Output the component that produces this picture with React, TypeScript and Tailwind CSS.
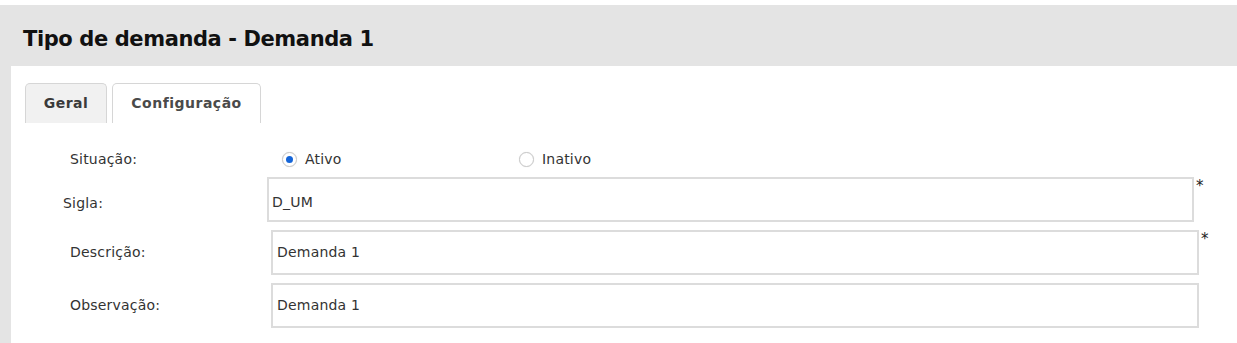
import React from "react";

function Radio({ checked }: { checked: boolean }) {
  return (
    <span className="w-[15px] h-[15px] shrink-0 rounded-full border border-[#c8c8c8] bg-white flex items-center justify-center shadow-[0_0_1px_#ddd]">
      {checked && <span className="w-[7px] h-[7px] rounded-full bg-[#1565d8]" />}
    </span>
  );
}

export default function App() {
  const font = { fontFamily: '"DejaVu Sans", Verdana, sans-serif' };
  return (
    <div className="w-[1237px] h-[343px] bg-white pt-[5px] overflow-hidden" style={font}>
      <div className="bg-[#e4e4e4] h-[338px] flex flex-col pl-[11px]">
        <div className="h-[61px] shrink-0 pl-[12px] pt-[22px]">
          <h1 className="text-[21px] leading-[25px] font-bold text-[#111] tracking-[-0.4px]">
            Tipo de demanda - Demanda 1
          </h1>
        </div>
        <div className="bg-white flex-1 pt-[17px] pl-[14px]">
          <div className="flex gap-[5px] items-end">
            <div className="w-[82px] h-[40px] rounded-t-[5px] border border-b-0 border-[#d6d6d6] bg-[#f1f1f1] flex items-center justify-center text-[14px] font-bold text-[#3a3a3a] tracking-[0.5px]">
              Geral
            </div>
            <div className="w-[149px] h-[40px] rounded-t-[5px] border border-b-0 border-[#d6d6d6] bg-white flex items-center justify-center text-[14px] font-bold text-[#4a4a4a] tracking-[0.5px]">
              Configuração
            </div>
          </div>
          <div className="text-[14px] text-[#333] tracking-[0.2px] pt-[24px]">
            <div className="flex items-center h-[24px]">
              <span className="ml-[45px] w-[212px]">Situação:</span>
              <div className="flex items-center gap-[8px] w-[237px]">
                <Radio checked />
                <span>Ativo</span>
              </div>
              <div className="flex items-center gap-[8px]">
                <Radio checked={false} />
                <span>Inativo</span>
              </div>
            </div>
            <div className="flex items-start mt-[6px]">
              <div className="ml-[38px] w-[204px] h-[45px] pt-[8px] flex items-center">Sigla:</div>
              <div className="w-[927px] h-[45px] border-2 border-[#dcdcdc] pl-[3px] pt-[6px] flex items-center">D_UM</div>
              <span className="text-[15px] leading-[14px] ml-[2px] mt-[2px] text-[#222]">*</span>
            </div>
            <div className="flex items-center mt-[8px]">
              <span className="ml-[45px] w-[201px]">Descrição:</span>
              <div className="w-[928px] h-[45px] border-2 border-[#dcdcdc] pl-[4px] flex items-center">Demanda 1</div>
              <span className="text-[15px] leading-[14px] ml-[2px] self-start mt-[2px] text-[#222]">*</span>
            </div>
            <div className="flex items-center mt-[8px]">
              <span className="ml-[45px] w-[201px]">Observação:</span>
              <div className="w-[928px] h-[45px] border-2 border-[#dcdcdc] pl-[4px] flex items-center">Demanda 1</div>
            </div>
          </div>
        </div>
      </div>
    </div>
  );
}
